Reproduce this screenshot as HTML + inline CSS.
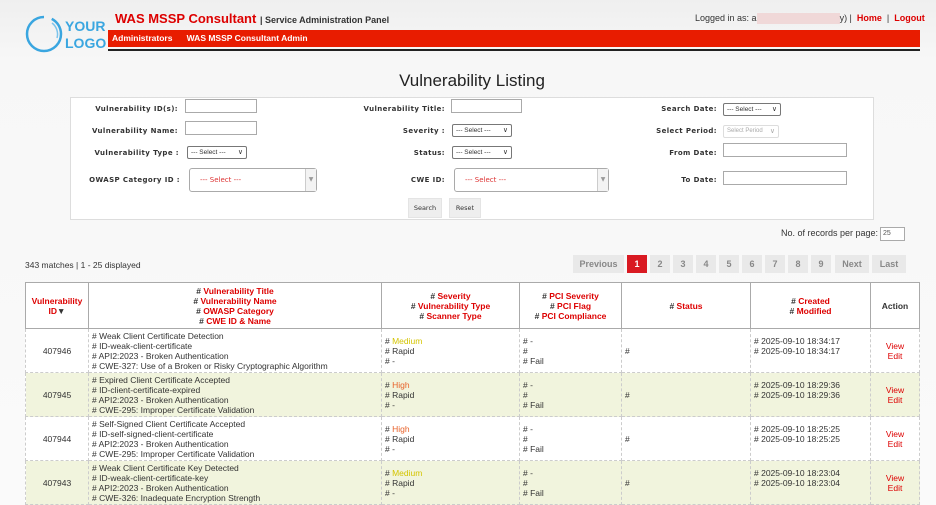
<!DOCTYPE html>
<html><head><meta charset="utf-8"><style>
*{margin:0;padding:0;box-sizing:border-box}
html{background:#fafafa}
body{width:936px;height:480px;overflow:hidden;background:linear-gradient(#efefef 0,#f7f7f7 60px,#fafafa 100%);font-family:"Liberation Sans",Arial,sans-serif;font-size:9px;color:#333;position:relative}
.a{position:absolute}
.red{color:#e00}
.lbl{position:absolute;font-family:"DejaVu Sans",sans-serif;font-weight:bold;font-size:7px;color:#333;letter-spacing:.4px;text-align:right}
.inp{position:absolute;background:#fff;border:1px solid #aaa;height:14px}
.sel{position:absolute;background:#fff;border:1px solid #777;border-radius:2px;height:13px;font-size:6.5px;padding:2px 3px;color:#333}
.sel:after{content:"\2228";position:absolute;right:3px;top:1px;font-size:7px}
.big{position:absolute;background:#fff;border:1px solid #aaa;border-radius:3px;height:24px;font-size:7px;color:#d33;padding:7px 10px;font-family:"DejaVu Sans",sans-serif}
.big span{position:absolute;right:0;top:0;width:11px;height:22px;border-left:1px solid #ccc;background:#f3f3f3;font-size:6px;color:#999;text-align:center;line-height:22px}
.btn{position:absolute;background:#eee;border:1px solid #e4e4e4;font-size:6.5px;text-align:center;line-height:18px;font-family:"DejaVu Sans",sans-serif}
.pg{position:absolute;top:255px;height:18px;background:#e9e9e9;color:#888;font-weight:bold;font-size:9px;text-align:center;line-height:18px}
table{position:absolute;left:25px;top:282px;width:895px;border-collapse:collapse;background:#fff}
td,th{border:1px dashed #ccc;font-size:8.5px;line-height:10px;vertical-align:middle;padding:0 3px}
th{border:1px solid #aaa;font-weight:bold;color:#333;height:46px;text-align:center}
th span,.red{color:#d00}
tr.r td{height:44px}
tr.y td{background:#f1f4dd}
.c{text-align:center}
.med{color:#d4c400}.hi{color:#e8622a}
.act{text-align:center;color:#d00}
</style></head><body>
<svg class="a" style="left:24px;top:14px" width="40" height="40" viewBox="0 0 40 40"><circle cx="20" cy="20" r="17" fill="none" stroke="#3aa6e0" stroke-width="2.5" stroke-dasharray="80 8"/><path d="M28 9 A14 14 0 0 1 33 24" fill="none" stroke="#7cc4ec" stroke-width="1.5"/></svg>
<div class="a" style="left:65px;top:18px;color:#3aa6e0;font-weight:bold;font-size:14px;line-height:17px">YOUR<br>LOGO</div>
<div class="a" style="left:115px;top:11px;font-size:13px;font-weight:bold;color:#d00">WAS MSSP Consultant <span style="color:#333;font-size:9px;font-weight:bold">| Service Administration Panel</span></div>
<div class="a" style="left:695px;top:13px;font-size:9px;color:#333">Logged in as: a<span style="display:inline-block;width:83px;height:11px;background:#f0d8d8;vertical-align:middle"></span>y) | &nbsp;<b class="red">Home</b> &nbsp;| &nbsp;<b class="red">Logout</b></div>
<div class="a" style="left:108px;top:30px;width:812px;height:17px;background:#e81c00;color:#fff;font-weight:bold;font-size:8.5px;line-height:17px;padding-left:4px">Administrators &nbsp; &nbsp; &nbsp;WAS MSSP Consultant Admin</div>
<div class="a" style="left:108px;top:49px;width:812px;height:2px;background:#222"></div>
<div class="a" style="left:0;top:71px;width:944px;text-align:center;font-size:17px;color:#222">Vulnerability Listing</div>
<div class="a" style="left:70px;top:97px;width:804px;height:123px;background:#fff;border:1px solid #ddd"></div>
<div class="lbl" style="left:60px;width:118px;top:105px">Vulnerability ID(s):</div><div class="inp" style="left:185px;top:99px;width:72px"></div>
<div class="lbl" style="left:60px;width:118px;top:127px">Vulnerability Name:</div><div class="inp" style="left:185px;top:121px;width:72px"></div>
<div class="lbl" style="left:60px;width:119px;top:149px">Vulnerability Type :</div><div class="sel" style="left:187px;top:146px;width:60px">--- Select ---</div>
<div class="lbl" style="left:60px;width:120px;top:176px">OWASP Category ID :</div><div class="big" style="left:189px;top:168px;width:128px">--- Select ---<span>▼</span></div>
<div class="lbl" style="left:330px;width:115px;top:105px">Vulnerability Title:</div><div class="inp" style="left:451px;top:99px;width:71px"></div>
<div class="lbl" style="left:330px;width:115px;top:127px">Severity :</div><div class="sel" style="left:452px;top:124px;width:60px">--- Select ---</div>
<div class="lbl" style="left:330px;width:115px;top:149px">Status:</div><div class="sel" style="left:452px;top:146px;width:60px">--- Select ---</div>
<div class="lbl" style="left:330px;width:115px;top:176px">CWE ID:</div><div class="big" style="left:454px;top:168px;width:155px">--- Select ---<span>▼</span></div>
<div class="lbl" style="left:600px;width:117px;top:105px">Search Date:</div><div class="sel" style="left:723px;top:103px;width:58px">--- Select ---</div>
<div class="lbl" style="left:600px;width:117px;top:127px">Select Period:</div><div class="sel" style="left:723px;top:125px;width:56px;border-color:#ddd;color:#aaa;font-size:6px">Select Period</div>
<div class="lbl" style="left:600px;width:117px;top:149px">From Date:</div><div class="inp" style="left:723px;top:143px;width:124px"></div>
<div class="lbl" style="left:600px;width:117px;top:176px">To Date:</div><div class="inp" style="left:723px;top:171px;width:124px"></div>
<div class="btn" style="left:408px;top:198px;width:34px;height:20px">Search</div>
<div class="btn" style="left:449px;top:198px;width:32px;height:20px">Reset</div>
<div class="a" style="left:781px;top:228px;font-size:9px">No. of records per page:</div>
<div class="inp" style="left:880px;top:227px;width:25px;font-size:7px;padding:2px;color:#555">25</div>
<div class="a" style="left:25px;top:260px;font-size:8.5px">343 matches | 1 - 25 displayed</div>
<div class="pg" style="left:573px;width:51px">Previous</div>
<div class="pg" style="left:627px;width:20px;background:#d91a22;color:#fff">1</div>
<div class="pg" style="left:650px;width:20px">2</div><div class="pg" style="left:673px;width:20px">3</div><div class="pg" style="left:696px;width:20px">4</div><div class="pg" style="left:719px;width:20px">5</div><div class="pg" style="left:742px;width:20px">6</div><div class="pg" style="left:765px;width:20px">7</div><div class="pg" style="left:788px;width:20px">8</div><div class="pg" style="left:811px;width:20px">9</div>
<div class="pg" style="left:835px;width:34px">Next</div><div class="pg" style="left:872px;width:34px">Last</div>
<table>
<tr><th style="width:63px"><span>Vulnerability<br>ID</span>▼</th><th style="width:293px"># <span>Vulnerability Title</span><br># <span>Vulnerability Name</span><br># <span>OWASP Category</span><br># <span>CWE ID &amp; Name</span></th><th style="width:138px"># <span>Severity</span><br># <span>Vulnerability Type</span><br># <span>Scanner Type</span></th><th style="width:102px"># <span>PCI Severity</span><br># <span>PCI Flag</span><br># <span>PCI Compliance</span></th><th style="width:129px"># <span>Status</span></th><th style="width:120px"># <span>Created</span><br># <span>Modified</span></th><th>Action</th></tr>
<tr class="r"><td class="c">407946</td><td># Weak Client Certificate Detection<br># ID-weak-client-certificate<br># API2:2023 - Broken Authentication<br># CWE-327: Use of a Broken or Risky Cryptographic Algorithm</td><td># <span class="med">Medium</span><br># Rapid<br># -</td><td># -<br>#<br># Fail</td><td>#</td><td># 2025-09-10 18:34:17<br># 2025-09-10 18:34:17<br><br></td><td class="act">View<br>Edit</td></tr>
<tr class="r y"><td class="c">407945</td><td># Expired Client Certificate Accepted<br># ID-client-certificate-expired<br># API2:2023 - Broken Authentication<br># CWE-295: Improper Certificate Validation</td><td># <span class="hi">High</span><br># Rapid<br># -</td><td># -<br>#<br># Fail</td><td>#</td><td># 2025-09-10 18:29:36<br># 2025-09-10 18:29:36<br><br></td><td class="act">View<br>Edit</td></tr>
<tr class="r"><td class="c">407944</td><td># Self-Signed Client Certificate Accepted<br># ID-self-signed-client-certificate<br># API2:2023 - Broken Authentication<br># CWE-295: Improper Certificate Validation</td><td># <span class="hi">High</span><br># Rapid<br># -</td><td># -<br>#<br># Fail</td><td>#</td><td># 2025-09-10 18:25:25<br># 2025-09-10 18:25:25<br><br></td><td class="act">View<br>Edit</td></tr>
<tr class="r y"><td class="c">407943</td><td># Weak Client Certificate Key Detected<br># ID-weak-client-certificate-key<br># API2:2023 - Broken Authentication<br># CWE-326: Inadequate Encryption Strength</td><td># <span class="med">Medium</span><br># Rapid<br># -</td><td># -<br>#<br># Fail</td><td>#</td><td># 2025-09-10 18:23:04<br># 2025-09-10 18:23:04<br><br></td><td class="act">View<br>Edit</td></tr>
</table>
</body></html>
